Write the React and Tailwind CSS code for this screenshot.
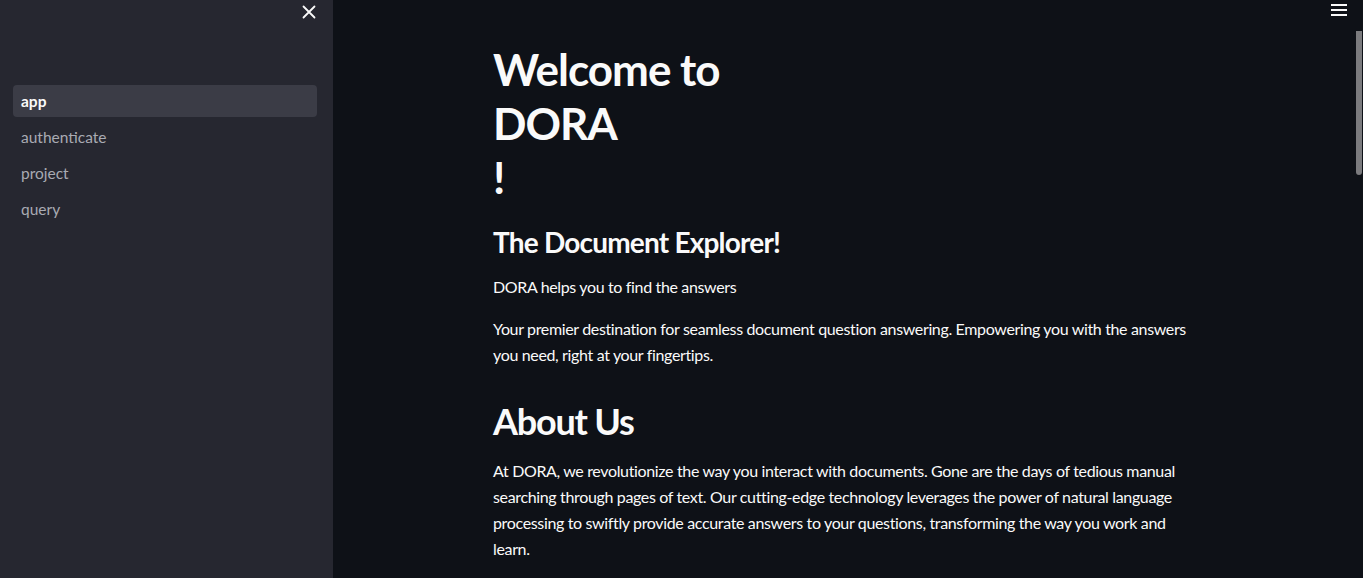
import React from "react";

const NavItem = ({ label, active }) => (
  <div
    className={
      active
        ? "h-8 flex items-center pt-[2px] px-2 rounded bg-[#3b3c46] text-[#fafafa] font-bold"
        : "h-8 flex items-center pt-[2px] px-2 rounded text-[#a9abb3]"
    }
  >
    {label}
  </div>
);

const Line = ({ children }) => <span className="block whitespace-nowrap">{children}</span>;

const App = () => {
  return (
    <div className="flex h-[578px] w-full overflow-hidden bg-[#0e1117] font-['Lato',sans-serif]">
      <aside className="w-[333px] shrink-0 bg-[#262730] flex flex-col">
        <div className="flex justify-end pr-[17px] pt-[5px] h-[85px]">
          <svg width="14" height="14" viewBox="0 0 14 14" className="text-[#fafafa]">
            <path d="M1.5 1.5 L12.5 12.5 M12.5 1.5 L1.5 12.5" stroke="currentColor" strokeWidth="1.8" strokeLinecap="round" />
          </svg>
        </div>
        <nav className="flex flex-col gap-1 px-[13px] w-[330px] text-[15.5px]">
          <NavItem label="app" active />
          <NavItem label="authenticate" />
          <NavItem label="project" />
          <NavItem label="query" />
        </nav>
      </aside>

      <main className="relative flex-1 flex justify-center text-[#fafafa]">
        <div className="absolute top-[4px] right-[16px] flex flex-col gap-[3px]">
          <span className="block w-4 h-[2px] bg-[#fafafa]" />
          <span className="block w-4 h-[2px] bg-[#fafafa]" />
          <span className="block w-4 h-[2px] bg-[#fafafa]" />
        </div>
        <div className="absolute top-[31px] right-[1px] w-[6px] h-[144px] rounded-b bg-[#7b7b7e]" />

        <div className="w-[704px] mr-[8px] pt-[42px] ml-[2px]">
          <h1 className="text-[44px] leading-[54px] font-bold tracking-[-1px]">
            Welcome to
            <br />
            DORA
            <br />!
          </h1>
          <h3 className="mt-[21px] text-[28px] leading-[34px] font-bold tracking-[-0.8px]">The Document Explorer!</h3>
          <p className="mt-[15px] text-base leading-[26px] tracking-[-0.35px]">DORA helps you to find the answers</p>
          <p className="mt-[16px] text-base leading-[26px] tracking-[-0.35px]">
            <Line>Your premier destination for seamless document question answering. Empowering you with the answers</Line>
            <Line>you need, right at your fingertips.</Line>
          </p>
          <h2 className="mt-[31px] text-[36px] leading-[44px] font-bold tracking-[-1.2px]">About Us</h2>
          <p className="mt-[15px] text-base leading-[26px] tracking-[-0.35px]">
            <Line>At DORA, we revolutionize the way you interact with documents. Gone are the days of tedious manual</Line>
            <Line>searching through pages of text. Our cutting-edge technology leverages the power of natural language</Line>
            <Line>processing to swiftly provide accurate answers to your questions, transforming the way you work and</Line>
            <Line>learn.</Line>
          </p>
        </div>
      </main>
    </div>
  );
};

export default App;
